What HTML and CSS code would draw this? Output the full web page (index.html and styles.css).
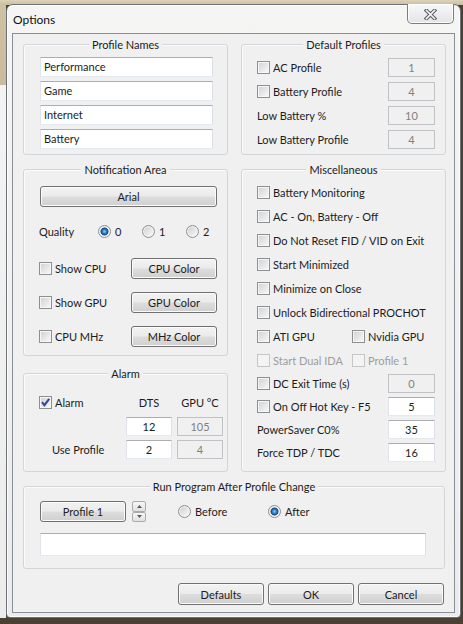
FILE: index.html
```html
<!DOCTYPE html>
<html>
<head>
<meta charset="utf-8">
<title>Options</title>
<link rel="stylesheet" href="styles.css">
</head>
<body>
<div class="window">
  <div class="titlebar">
    <span class="title">Options</span>
    <div class="close">
      <svg width="13" height="11" viewBox="0 0 13 11"><path d="M2.5 1.5 L10.5 9.5 M10.5 1.5 L2.5 9.5" stroke="#5f6166" stroke-width="3.8" stroke-linecap="square" fill="none"/><path d="M2.5 1.5 L10.5 9.5 M10.5 1.5 L2.5 9.5" stroke="#f4f4f4" stroke-width="1.6" stroke-linecap="square" fill="none"/></svg>
    </div>
  </div>
  <div class="client">
    <div class="cols">
      <div class="col">
        <div class="group g-names">
          <div class="gtitle">Profile Names</div>
          <div class="names">
            <div class="tb">Performance</div>
            <div class="tb">Game</div>
            <div class="tb">Internet</div>
            <div class="tb">Battery</div>
          </div>
        </div>
        <div class="group g-notif">
          <div class="gtitle">Notification Area</div>
          <div class="notif">
            <div class="btn btn-font">Arial</div>
            <div class="quality">
              <span>Quality</span>
              <label class="opt"><span class="rb on"></span>0</label>
              <label class="opt"><span class="rb"></span>1</label>
              <label class="opt"><span class="rb"></span>2</label>
            </div>
            <div class="colrow"><label class="chk"><span class="cb"></span>Show CPU</label><div class="btn">CPU Color</div></div>
            <div class="colrow"><label class="chk"><span class="cb"></span>Show GPU</label><div class="btn">GPU Color</div></div>
            <div class="colrow"><label class="chk"><span class="cb"></span>CPU MHz</label><div class="btn">MHz Color</div></div>
          </div>
        </div>
        <div class="group g-alarm">
          <div class="gtitle">Alarm</div>
          <div class="alarm">
            <label class="chk"><span class="cb on"><svg width="11" height="11" viewBox="0 0 11 11"><path d="M2 5.2 L4.4 8.2 L9.2 1.8" stroke="#34489a" stroke-width="2.1" fill="none"/></svg></span>Alarm</label>
            <span class="hdr">DTS</span>
            <span class="hdr">GPU °C</span>
            <span></span>
            <div class="tb num">12</div>
            <div class="tb num dis">105</div>
            <span class="useprof">Use Profile</span>
            <div class="tb num">2</div>
            <div class="tb num dis">4</div>
          </div>
        </div>
      </div>
      <div class="col">
        <div class="group g-default">
          <div class="gtitle">Default Profiles</div>
          <div class="defaults">
            <div class="row"><label class="chk"><span class="cb"></span>AC Profile</label><div class="tb num dis sm">1</div></div>
            <div class="row"><label class="chk"><span class="cb"></span>Battery Profile</label><div class="tb num dis sm">4</div></div>
            <div class="row"><span>Low Battery %</span><div class="tb num dis sm">10</div></div>
            <div class="row"><span>Low Battery Profile</span><div class="tb num dis sm">4</div></div>
          </div>
        </div>
        <div class="group g-misc">
          <div class="gtitle">Miscellaneous</div>
          <div class="misc">
            <div class="mrow"><label class="chk"><span class="cb"></span>Battery Monitoring</label></div>
            <div class="mrow"><label class="chk"><span class="cb"></span>AC - On, Battery - Off</label></div>
            <div class="mrow"><label class="chk"><span class="cb"></span>Do Not Reset FID / VID on Exit</label></div>
            <div class="mrow"><label class="chk"><span class="cb"></span>Start Minimized</label></div>
            <div class="mrow"><label class="chk"><span class="cb"></span>Minimize on Close</label></div>
            <div class="mrow"><label class="chk"><span class="cb"></span>Unlock Bidirectional PROCHOT</label></div>
            <div class="mrow pair"><label class="chk"><span class="cb"></span>ATI GPU</label><label class="chk"><span class="cb"></span>Nvidia GPU</label></div>
            <div class="mrow pair disabled"><label class="chk"><span class="cb dis"></span>Start Dual IDA</label><label class="chk"><span class="cb dis"></span>Profile 1</label></div>
            <div class="mrow short"><label class="chk"><span class="cb"></span>DC Exit Time (s)</label><div class="tb num dis sm">0</div></div>
            <div class="mrow short"><label class="chk"><span class="cb"></span>On Off Hot Key - F5</label><div class="tb num sm">5</div></div>
            <div class="mrow short"><span>PowerSaver C0%</span><div class="tb num sm">35</div></div>
            <div class="mrow short"><span>Force TDP / TDC</span><div class="tb num sm">16</div></div>
          </div>
        </div>
      </div>
    </div>
    <div class="group g-run">
      <div class="gtitle">Run Program After Profile Change</div>
      <div class="run">
        <div class="runrow">
          <div class="btn btn-prof">Profile 1</div>
          <div class="spin">
            <span><svg width="5" height="3" viewBox="0 0 5 3"><path d="M0 3 L2.5 0 L5 3Z" fill="#5a5a5a"/></svg></span>
            <span><svg width="5" height="3" viewBox="0 0 5 3"><path d="M0 0 L2.5 3 L5 0Z" fill="#5a5a5a"/></svg></span>
          </div>
          <label class="opt before"><span class="rb"></span>Before</label>
          <label class="opt"><span class="rb on"></span>After</label>
        </div>
        <div class="tb path"></div>
      </div>
    </div>
    <div class="buttons">
      <div class="btn btn-bottom">Defaults</div>
      <div class="btn btn-bottom">OK</div>
      <div class="btn btn-bottom">Cancel</div>
    </div>
  </div>
</div>
</body>
</html>
```
FILE: styles.css
```css
html, body {
  margin: 0;
}
body {
  box-sizing: border-box;
  width: 463px;
  height: 624px;
  overflow: hidden;
  padding: 4px 0 0 6px;
  font-family: Lato, "Open Sans", sans-serif;
  font-size: 11px;
  color: #1c1c1c;
  background-color: #4a4034;
  background-image:
    linear-gradient(#ddd3ba, #c9bd9d),
    linear-gradient(#cfc3a4 0, #c8bc9c 85px, #f3f3f3 85px, #ececec 100%);
  background-size: 100% 5px, 6px 618px;
  background-position: 0 0, 0 0;
  background-repeat: no-repeat;
}

.window {
  box-sizing: border-box;
  width: 455px;
  height: 614px;
  border: 1px solid #6d7178;
  border-radius: 7px 7px 4px 4px;
  background: linear-gradient(#f5f5f3, #eaebec);
  box-shadow: inset 0 0 0 1px rgba(255, 255, 255, 0.8);
  padding: 0 5px 5px 5px;
}

.titlebar {
  height: 28px;
  display: flex;
  justify-content: space-between;
  align-items: center;
  padding-left: 1px;
}
.title {
  font-size: 12px;
  color: #111;
}
.close {
  box-sizing: border-box;
  align-self: flex-start;
  margin-top: -1px;
  margin-right: 1px;
  width: 47px;
  height: 20px;
  border: 1px solid #7a7d84;
  border-top: none;
  border-radius: 0 0 5px 5px;
  background: linear-gradient(#f8f8f8, #e2e4e7);
  box-shadow: inset 0 0 0 1px rgba(255, 255, 255, 0.85);
  display: flex;
  align-items: center;
  justify-content: center;
}
.close svg { display: block; margin-top: 1px; }

.client {
  box-sizing: border-box;
  height: 580px;
  border: 1px solid #8a8e95;
  background: #f0f0f0;
  padding: 10px 9px 0 10px;
}

.cols {
  display: grid;
  grid-template-columns: 205px 205px;
  column-gap: 13px;
}
.col {
  display: flex;
  flex-direction: column;
}

.group {
  box-sizing: border-box;
  border: 1px solid #d3d6d9;
  border-radius: 3px;
  box-shadow: inset 1px 1px 0 #fbfbfb;
}
.gtitle {
  margin: -8px auto 0;
  width: max-content;
  padding: 0 3px;
  background: #f0f0f0;
  line-height: 15px;
}

.g-names, .g-default { height: 111px; }
.g-notif { margin-top: 14px; height: 187px; }
.g-alarm { margin-top: 17px; height: 99px; }
.g-misc { margin-top: 14px; height: 303px; }
.g-run { margin-top: 14px; height: 83px; width: 422px; }

/* text boxes */
.tb {
  box-sizing: border-box;
  height: 20px;
  border: 1px solid;
  border-color: #abadb3 #dbdfe6 #e3e9ef #e2e3ea;
  background: #fff;
  padding: 0 3px;
  line-height: 18px;
  white-space: nowrap;
}
.tb.num { text-align: center; padding: 0; }
.tb.dis {
  background: #f0f0f0;
  border-color: #bfc1c4;
  color: #808080;
}
.tb.sm { width: 47px; height: 19px; line-height: 17px; }

/* checkboxes & radios */
.chk, .opt {
  display: flex;
  align-items: center;
  gap: 3px;
  white-space: nowrap;
}
.cb {
  box-sizing: border-box;
  flex: none;
  width: 13px;
  height: 13px;
  border: 1px solid #8e8f8f;
  background: linear-gradient(135deg, #cdd0d5 0%, #e6e7e9 55%, #fafafa 100%);
  box-shadow: inset 0 0 0 1px #f6f6f6;
  display: flex;
  align-items: center;
  justify-content: center;
}
.cb svg { display: block; }
.cb.dis {
  border-color: #c6c6c6;
  background: #f4f4f4;
  box-shadow: none;
}
.rb {
  box-sizing: border-box;
  flex: none;
  width: 13px;
  height: 13px;
  border-radius: 50%;
  border: 1px solid #8e8f8f;
  background: linear-gradient(135deg, #c9ccd1 0%, #e6e7e9 55%, #fbfbfb 100%);
  box-shadow: inset 0 0 0 1px #f4f4f4;
}
.rb.on {
  background: radial-gradient(circle at 50% 50%, #8ccaf2 0, #3a86cc 1.8px, #1a4f8e 3.3px, #2b5f95 3.8px, #e6e8ea 4.3px, #f6f6f6 100%);
}
.opt { gap: 4px; }

/* buttons */
.btn {
  box-sizing: border-box;
  height: 21px;
  border: 1px solid #707070;
  border-radius: 3px;
  background: linear-gradient(#f2f2f2 0%, #ebebeb 48%, #dddddd 52%, #cfcfcf 100%);
  box-shadow: inset 0 0 0 1px #fbfbfb;
  display: flex;
  align-items: center;
  justify-content: center;
  white-space: nowrap;
}

/* Profile Names */
.names {
  padding: 5px 0 0 16px;
  display: flex;
  flex-direction: column;
  gap: 4px;
}
.names .tb { width: 173px; }

/* Default Profiles */
.defaults {
  padding: 5px 10px 0 15px;
  display: flex;
  flex-direction: column;
  gap: 4px;
}
.row {
  height: 20px;
  display: flex;
  align-items: center;
  justify-content: space-between;
}

/* Notification */
.notif {
  padding: 9px 0 0 15px;
}
.btn-font {
  width: 177px;
  margin-left: 1px;
}
.quality {
  margin-top: 14px;
  height: 20px;
  display: grid;
  grid-template-columns: 59px 44px 44px 44px;
  align-items: center;
}
.colrow {
  margin-top: 13px;
  height: 21px;
  display: grid;
  grid-template-columns: 92px 86px;
  align-items: center;
}
.quality + .colrow { margin-top: 17px; }

/* Alarm */
.alarm {
  margin-top: 11px;
  padding-left: 15px;
  display: grid;
  grid-template-columns: 82px 46px 46px;
  grid-template-rows: 21px 19px 19px;
  column-gap: 5px;
  row-gap: 4px;
  align-items: center;
}
.alarm .tb { height: 19px; line-height: 17px; }
.hdr { text-align: center; }
.useprof { padding-left: 13px; }

/* Misc */
.misc {
  padding: 3px 10px 0 15px;
  display: flex;
  flex-direction: column;
}
.mrow {
  height: 24px;
  display: flex;
  align-items: center;
  justify-content: space-between;
}
.mrow.short { height: 23px; }
.mrow.pair {
  display: grid;
  grid-template-columns: 95px auto;
  justify-content: start;
}
.mrow.disabled { color: #9d9d9d; }

/* Run program */
.run {
  padding: 7px 0 0 16px;
}
.runrow {
  height: 21px;
  display: flex;
  align-items: center;
}
.btn-prof { width: 86px; }
.spin {
  width: 14px;
  height: 21px;
  margin-left: 6px;
  display: flex;
  flex-direction: column;
}
.spin span {
  box-sizing: border-box;
  flex: 1;
  border: 1px solid #a9abae;
  border-radius: 2px;
  background: linear-gradient(#f7f7f7, #e0e0e0);
  display: flex;
  align-items: center;
  justify-content: center;
}
.spin svg { display: block; }
.before {
  margin-left: 32px;
  width: 90px;
}
.tb.path {
  margin-top: 11px;
  width: 386px;
  height: 23px;
}

/* bottom buttons */
.buttons {
  margin-top: 14px;
  display: flex;
  justify-content: flex-end;
  gap: 4px;
  padding-right: 1px;
}
.btn-bottom {
  width: 86px;
  height: 22px;
}
```
